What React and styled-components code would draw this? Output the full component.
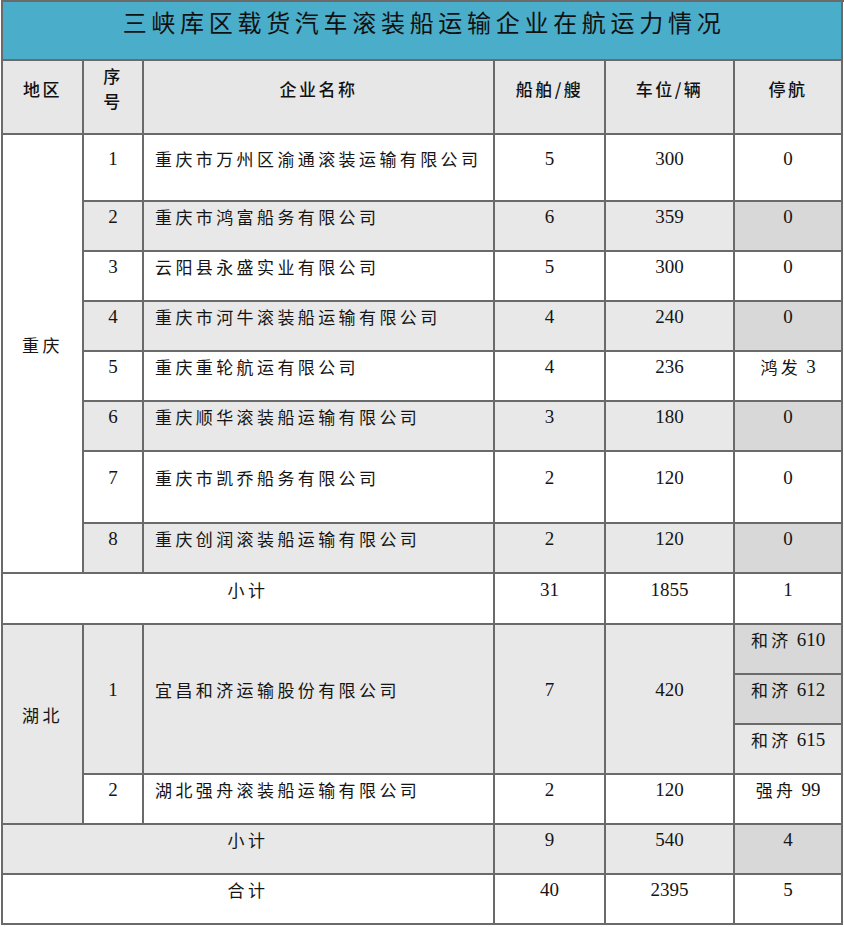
import React from "react";
import styled, { createGlobalStyle, css } from "styled-components";

const GlobalStyle = createGlobalStyle`
  html, body {
    margin: 0;
    padding: 0;
    background: #ffffff;
  }
  body {
    font-family: "Liberation Serif", "Noto Sans CJK SC", serif;
    color: #151515;
  }
`;

const LINE = "#6a6a6a";

const tones = {
  title: "#4aadc9",
  header: "#e7e7e7",
  white: "#ffffff",
  light: "#e8e8e8",
  dark: "#d8d8d8",
};

const Sheet = styled.div`
  width: 842px;
  margin-left: 1px;
  display: grid;
  grid-template-columns: 81px 60px 351px 111px 129px 108px;
  grid-template-rows: 59px 74px 67px 50px 50px 50px 50px 50px 72px 50px 51px 50px 50px 50px 50px 50px 50px;
  border-left: 2px solid ${LINE};
  border-top: 2px solid ${LINE};
`;

const Cell = styled.div`
  box-sizing: border-box;
  display: flex;
  align-items: center;
  justify-content: ${(p) => (p.$left ? "flex-start" : "center")};
  padding: 0 0 18px ${(p) => (p.$left ? "11px" : "0")};
  border-right: 2px solid ${LINE};
  border-bottom: 2px solid ${LINE};
  background: ${(p) => tones[p.$tone || "white"]};
  font-family: "Liberation Serif", "Noto Sans CJK SC", serif;
  font-size: 19px;
  line-height: 1.25;
  letter-spacing: 0;
  white-space: nowrap;
  ${(p) => p.$rows && css`grid-row: span ${p.$rows};`}
  ${(p) => p.$cols && css`grid-column: span ${p.$cols};`}
`;

const Title = styled(Cell)`
  grid-column: span 6;
  background: ${tones.title};
  font-family: "Noto Sans CJK SC", sans-serif;
  font-size: 24px;
  letter-spacing: 4.7px;
  padding-left: 4px;
  color: #111111;
`;

const Head = styled(Cell)`
  background: ${tones.header};
  font-family: "Noto Sans CJK SC", sans-serif;
  font-weight: 500;
  font-size: 17px;
  letter-spacing: 2.5px;
  line-height: 25px;
  text-align: center;
  color: #111111;
`;

const Cjk = styled.span`
  font-family: "Noto Sans CJK SC", sans-serif;
  font-size: 17px;
  letter-spacing: 3.5px;
`;

const Label = styled(Cell)`
  font-family: "Noto Sans CJK SC", sans-serif;
  font-size: 17px;
  letter-spacing: 3.4px;
`;

const chongqing = [
  ["1", "重庆市万州区渝通滚装运输有限公司", "5", "300", "0"],
  ["2", "重庆市鸿富船务有限公司", "6", "359", "0"],
  ["3", "云阳县永盛实业有限公司", "5", "300", "0"],
  ["4", "重庆市河牛滚装船运输有限公司", "4", "240", "0"],
  ["5", "重庆重轮航运有限公司", "4", "236", "鸿发 3"],
  ["6", "重庆顺华滚装船运输有限公司", "3", "180", "0"],
  ["7", "重庆市凯乔船务有限公司", "2", "120", "0"],
  ["8", "重庆创润滚装船运输有限公司", "2", "120", "0"],
];

function Mixed({ text }) {
  const m = text.match(/^(\S+)\s(\d+)$/);
  if (!m) return text;
  return (
    <>
      <Cjk>{m[1]}</Cjk>&nbsp;{m[2]}
    </>
  );
}

export default function App() {
  return (
    <>
      <GlobalStyle />
      <Sheet>
        <Title>三峡库区载货汽车滚装船运输企业在航运力情况</Title>

        <Head>地区</Head>
        <Head>
          序<br />号
        </Head>
        <Head>企业名称</Head>
        <Head>船舶/艘</Head>
        <Head>车位/辆</Head>
        <Head>停航</Head>

        <Label $rows={8}>重庆</Label>
        {chongqing.map(([no, name, ships, cars, stop], i) => {
          const shaded = i % 2 === 1;
          const tone = shaded ? "light" : "white";
          return (
            <React.Fragment key={no}>
              <Cell $tone={tone}>{no}</Cell>
              <Label $tone={tone} $left>
                {name}
              </Label>
              <Cell $tone={tone}>{ships}</Cell>
              <Cell $tone={tone}>{cars}</Cell>
              <Cell $tone={shaded ? "dark" : "white"}>
                <Mixed text={stop} />
              </Cell>
            </React.Fragment>
          );
        })}

        <Label $cols={3}>小计</Label>
        <Cell>31</Cell>
        <Cell>1855</Cell>
        <Cell>1</Cell>

        <Label $rows={4} $tone="light">湖北</Label>
        <Cell $rows={3} $tone="light">1</Cell>
        <Label $rows={3} $tone="light" $left>
          宜昌和济运输股份有限公司
        </Label>
        <Cell $rows={3} $tone="light">7</Cell>
        <Cell $rows={3} $tone="light">420</Cell>
        <Cell $tone="dark">
          <Mixed text="和济 610" />
        </Cell>
        <Cell $tone="dark">
          <Mixed text="和济 612" />
        </Cell>
        <Cell $tone="light">
          <Mixed text="和济 615" />
        </Cell>

        <Cell>2</Cell>
        <Label $left>湖北强舟滚装船运输有限公司</Label>
        <Cell>2</Cell>
        <Cell>120</Cell>
        <Cell>
          <Mixed text="强舟 99" />
        </Cell>

        <Label $cols={3} $tone="light">小计</Label>
        <Cell $tone="light">9</Cell>
        <Cell $tone="light">540</Cell>
        <Cell $tone="dark">4</Cell>

        <Label $cols={3}>合计</Label>
        <Cell>40</Cell>
        <Cell>2395</Cell>
        <Cell>5</Cell>
      </Sheet>
    </>
  );
}
